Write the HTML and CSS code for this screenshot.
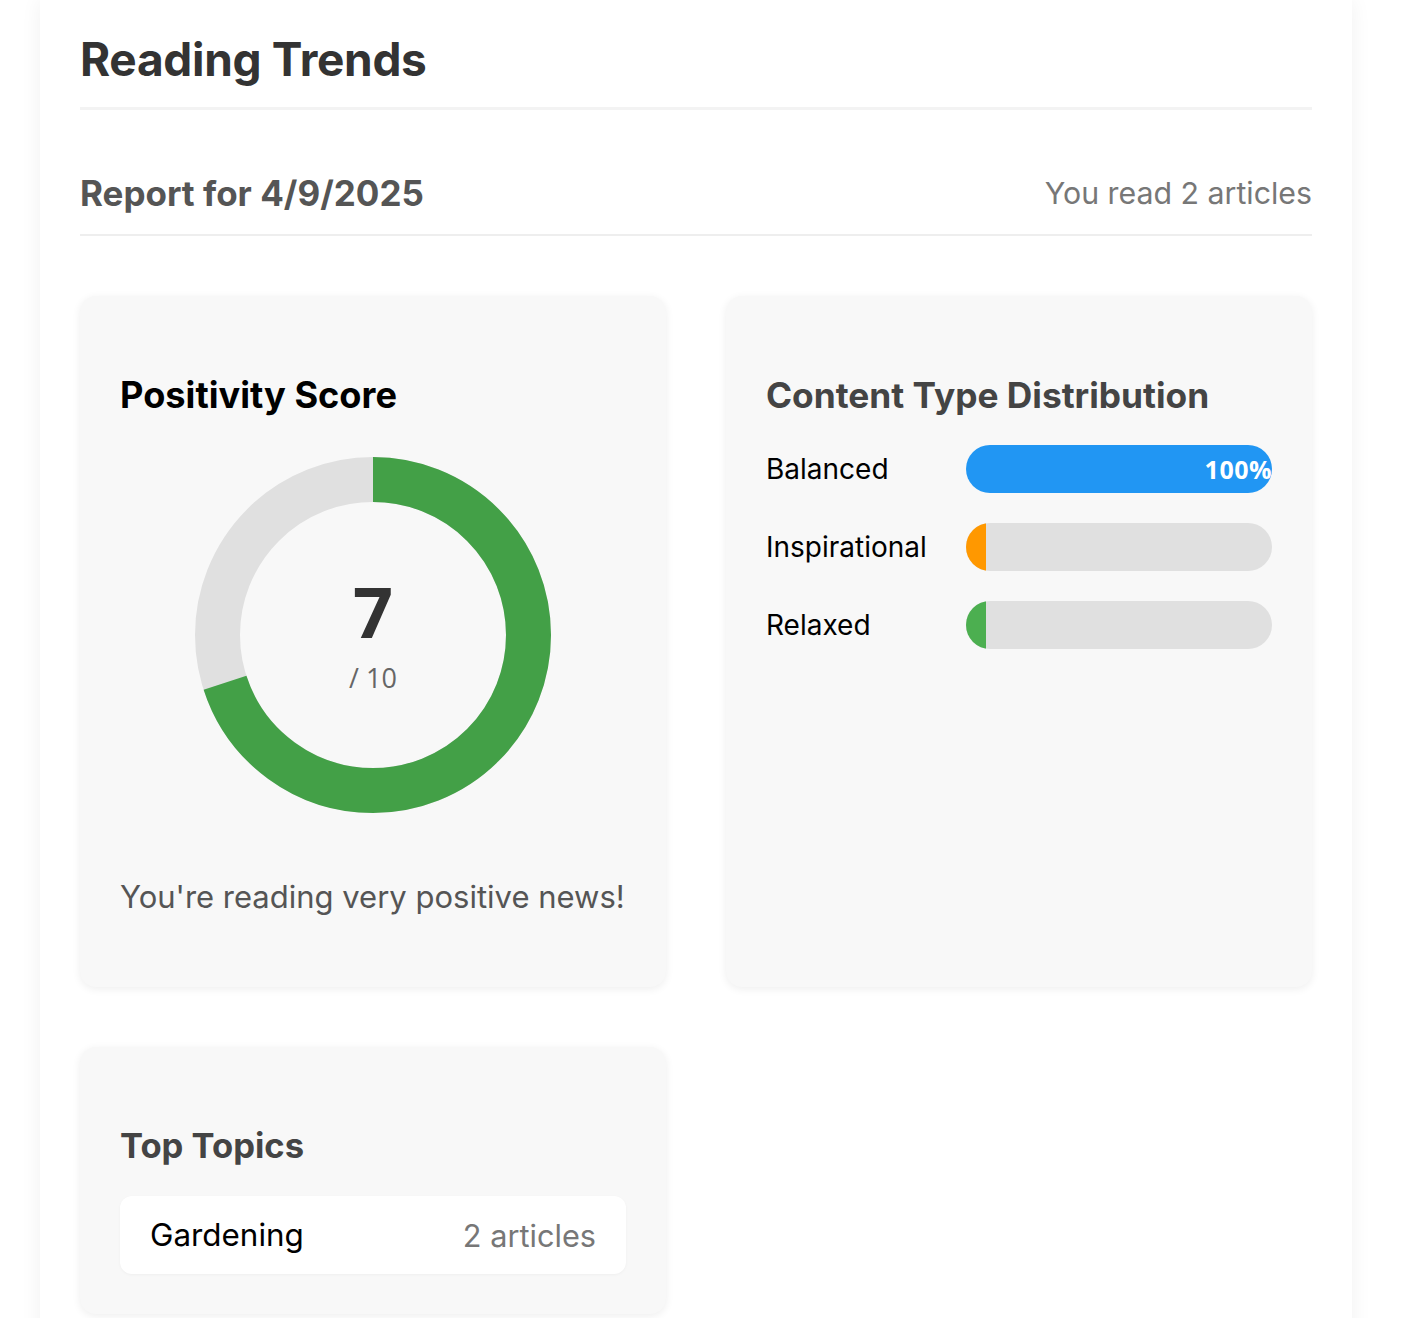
FILE: index.html
```html
<!DOCTYPE html>
<html lang="en">
<head>
<meta charset="utf-8">
<title>Reading Trends</title>
<link rel="stylesheet" href="styles.css">
</head>
<body>
<main class="container">
  <h1 class="page-title">Reading Trends</h1>
  <div class="report-header">
    <h2 class="report-date">Report for 4/9/2025</h2>
    <span class="report-count">You read 2 articles</span>
  </div>
  <div class="grid">
    <section class="card">
      <h3 class="card-title title-black">Positivity Score</h3>
      <div class="donut-wrap">
        <svg class="donut" width="358" height="358" viewBox="0 0 358 358">
          <circle cx="179" cy="179" r="155.5" fill="none" stroke="#e0e0e0" stroke-width="45"/>
          <circle cx="179" cy="179" r="155.5" fill="none" stroke="#43a047" stroke-width="45"
            stroke-dasharray="683.9 977" transform="rotate(-90 179 179)"/>
        </svg>
        <div class="donut-label">
          <span class="score">7</span>
          <span class="score-max">/ 10</span>
        </div>
      </div>
      <p class="score-text">You're reading very positive news!</p>
    </section>
    <section class="card">
      <h3 class="card-title dist-title">Content Type Distribution</h3>
      <div class="bars">
        <div class="bar-row">
          <span class="bar-label">Balanced</span>
          <div class="bar-track"><div class="bar-fill fill-blue" style="width:100%"><span class="bar-pct">100%</span></div></div>
        </div>
        <div class="bar-row">
          <span class="bar-label">Inspirational</span>
          <div class="bar-track"><div class="bar-fill fill-orange" style="width:0%"></div></div>
        </div>
        <div class="bar-row">
          <span class="bar-label">Relaxed</span>
          <div class="bar-track"><div class="bar-fill fill-green" style="width:0%"></div></div>
        </div>
      </div>
    </section>
    <section class="card">
      <h3 class="card-title topics-title">Top Topics</h3>
      <div class="topic">
        <span class="topic-name">Gardening</span>
        <span class="topic-count">2 articles</span>
      </div>
    </section>
  </div>
</main>
</body>
</html>
```

FILE: styles.css
```css
* { box-sizing: border-box; }
html, body { margin: 0; padding: 0; background: #ffffff; }
body {
  font-family: Inter, "Noto Sans", "Liberation Sans", sans-serif;
  color: #000;
}
.container {
  margin: 0 66px 0 40px;
  background: #fff;
  padding: 31px 40px 40px;
  box-shadow: 0 0 20px rgba(0,0,0,0.06);
  min-height: 1318px;
}
.page-title {
  margin: 0;
  font-size: 46px;
  font-weight: 700;
  color: #333;
  padding-bottom: 20px;
  border-bottom: 3px solid #f3f3f3;
  letter-spacing: -0.3px;
}
.report-header {
  display: flex;
  justify-content: space-between;
  align-items: center;
  margin-top: 62px;
  padding-bottom: 20px;
  border-bottom: 2px solid #eeeeee;
}
.report-date {
  margin: 0;
  font-size: 35px;
  font-weight: 700;
  color: #555;
}
.report-count {
  font-size: 30.3px;
  color: #777;
}
.grid {
  display: grid;
  grid-template-columns: 1fr 1fr;
  gap: 60px;
  margin-top: 60px;
  align-items: stretch;
}
.card {
  background: #f8f8f8;
  border-radius: 16px;
  padding: 40px;
  box-shadow: 0 2px 8px rgba(0,0,0,0.07);
}
.card-title {
  margin: 38px 0 28px;
  font-size: 35.3px;
  font-weight: 700;
  color: #444;
}
.dist-title { margin: 38px 0 28px; }
.topics-title { font-size: 34.6px; margin: 37px 0 30px; }
.title-black { color: #000; font-size: 36.2px; margin: 37px 0 39px; }
.donut-wrap {
  position: relative;
  width: 358px;
  height: 358px;
  margin: 0 auto;
}
.donut { display: block; }
.donut-label {
  position: absolute;
  inset: 0;
  display: flex;
  flex-direction: column;
  align-items: center;
  justify-content: center;
  font-family: "Open Sans", "Noto Sans", sans-serif;
}
.score {
  font-size: 70px;
  font-weight: 700;
  color: #333;
  line-height: 1;
  margin-top: 0;
}
.score-max {
  font-size: 27px;
  color: #666;
  margin-top: 16px;
  line-height: 1.2;
}
.score-text {
  margin: 64px 0 32px;
  font-size: 31px;
  color: #555;
}
.bars {
  display: flex;
  flex-direction: column;
  gap: 30px;
}
.bar-row {
  display: flex;
  align-items: center;
}
.bar-label {
  width: 200px;
  flex: none;
  font-size: 28px;
  color: #000;
}
.bar-track {
  flex: 1;
  height: 48px;
  border-radius: 24px;
  background: #e0e0e0;
  overflow: hidden;
}
.bar-fill {
  height: 100%;
  min-width: 20px;
  display: flex;
  align-items: center;
  justify-content: flex-end;
}
.fill-blue { background: #2196f3; }
.fill-orange { background: #ff9800; }
.fill-green { background: #4caf50; }
.bar-pct {
  font-family: "Open Sans", "Noto Sans", sans-serif;
  font-size: 25px;
  font-weight: 700;
  letter-spacing: 0.5px;
  color: #fff;
}
.topic {
  display: flex;
  justify-content: space-between;
  align-items: center;
  background: #fff;
  border-radius: 12px;
  height: 78px;
  padding: 0 30px;
  box-shadow: 0 1px 3px rgba(0,0,0,0.04);
}
.topic-name { font-size: 31.4px; color: #000; }
.topic-count { font-size: 30.7px; color: #777; }
```
